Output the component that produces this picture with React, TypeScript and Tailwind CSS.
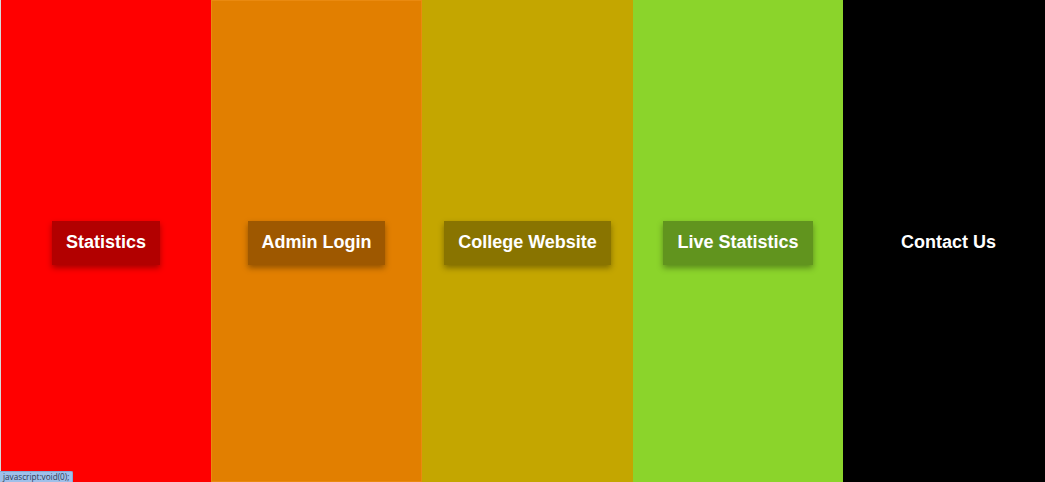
const links = [
  { label: "Statistics", bg: "bg-[#ff0000]", btn: true, w: "w-[211px] border-l border-l-[#d9d9d9]" },
  { label: "Admin Login", bg: "bg-[#e27f00]", btn: true, w: "w-[211px] border border-[#ea8a10]" },
  { label: "College Website", bg: "bg-[#c4a600]", btn: true, w: "w-[211px]" },
  { label: "Live Statistics", bg: "bg-[#8bd42b]", btn: true, w: "w-[210px]" },
  { label: "Contact Us", bg: "bg-black", btn: false, w: "w-[211px]" },
];

export default function App() {
  return (
    <div className="relative flex h-[482px] w-full overflow-hidden font-['Liberation_Sans',Arial,sans-serif]">
      {links.map((l) => (
        <div key={l.label} className={`${l.w} shrink-0 ${l.bg} flex items-center justify-center pt-[3px]`}>
          <a
            href="#"
            className={
              l.btn
                ? "bg-black/30 h-[44px] px-[14px] flex items-center text-[18px] font-bold text-white shadow-[0_3px_6px_rgba(0,0,0,0.35)]"
                : "h-[44px] px-[14px] flex items-center text-[18px] font-bold text-white"
            }
          >
            {l.label}
          </a>
        </div>
      ))}

      {/* browser status bubble */}
      <div className="absolute left-0 bottom-0 h-[11px] px-[3px] bg-[#9fc0ea] border-t border-r border-[#86a9d6] rounded-tr-[2px] text-[8.2px] leading-[10px] text-[#2c3a55] font-['Open_Sans',sans-serif]">
        javascript:void(0);
      </div>
    </div>
  );
}
